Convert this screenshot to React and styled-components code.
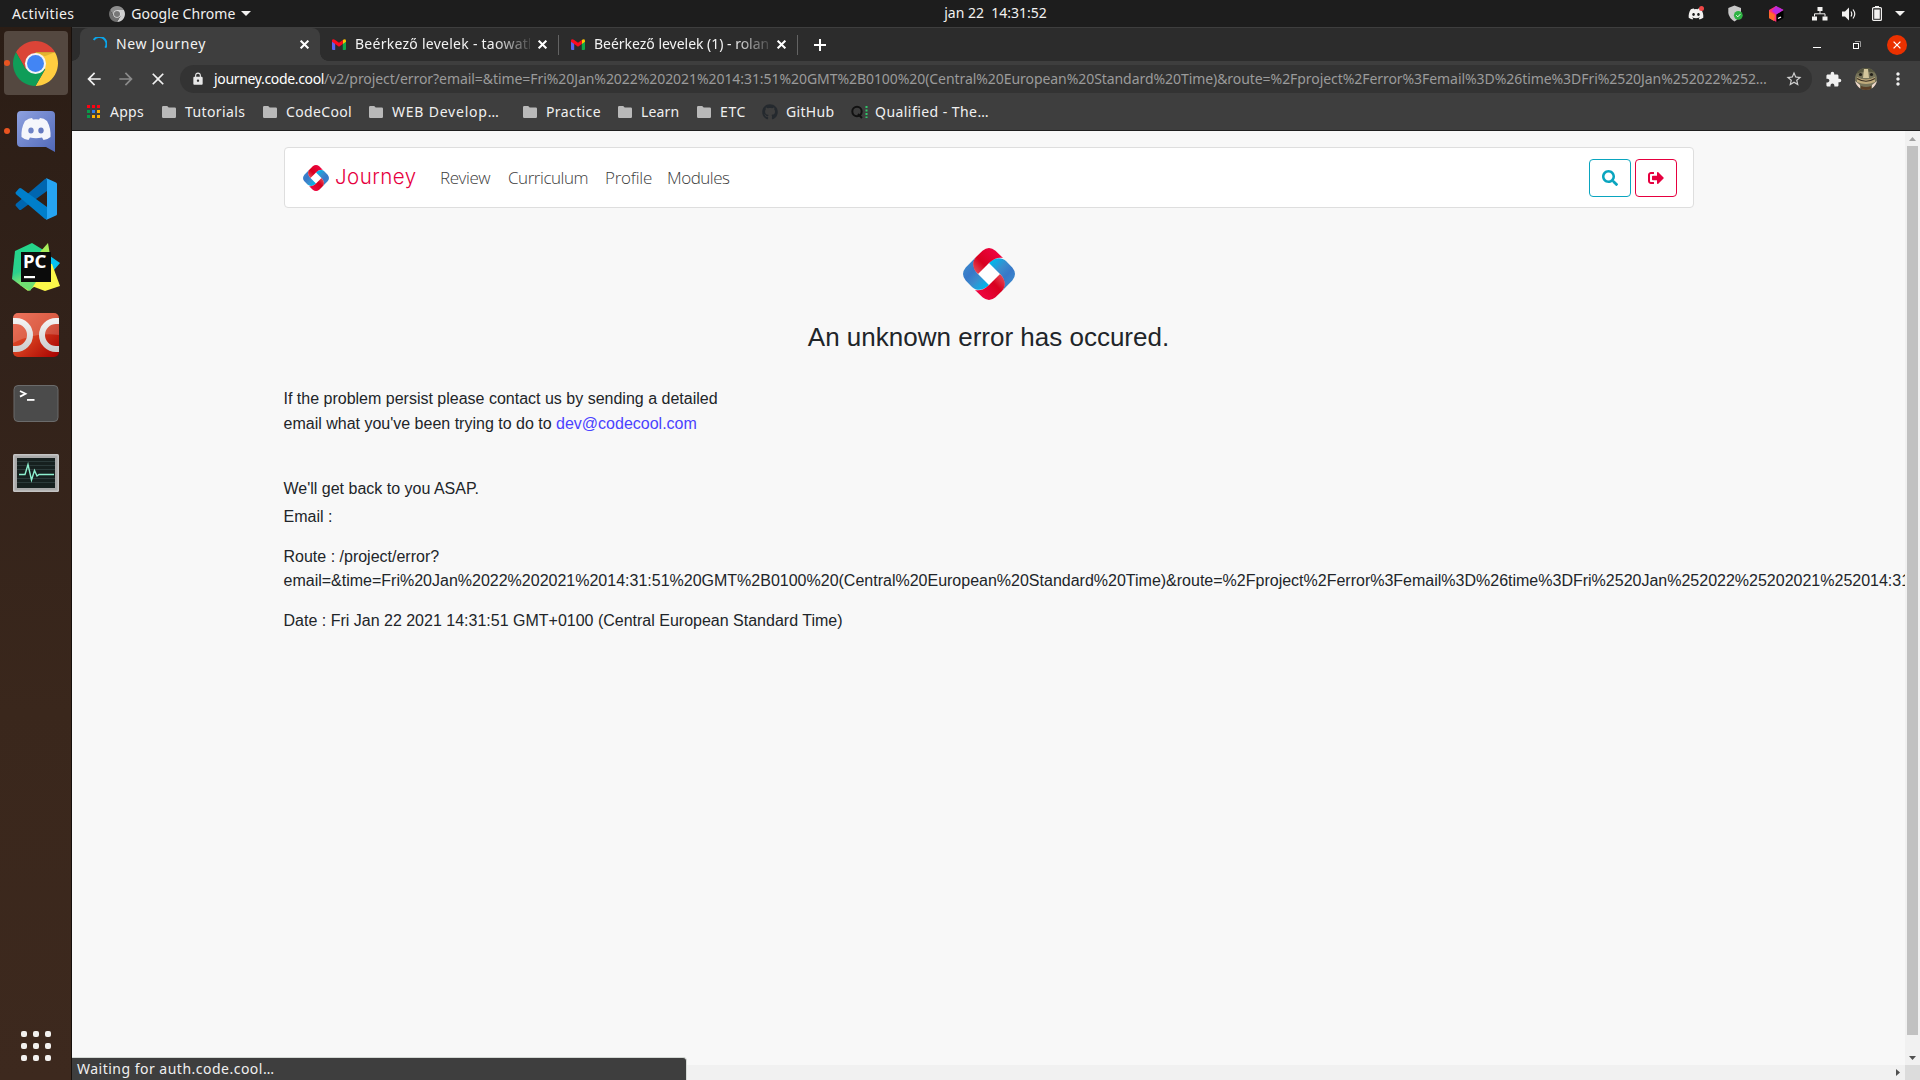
import React from "react";
import styled, { createGlobalStyle } from "styled-components";
import { MdArrowBack, MdArrowForward, MdClose, MdExtension, MdLock, MdMoreVert, MdStarBorder } from "react-icons/md";
import { FaDiscord, FaGithub, FaSearch, FaSignOutAlt } from "react-icons/fa";

const Global = createGlobalStyle`
  * { box-sizing: border-box; }
  html, body { margin: 0; height: 1080px; overflow: hidden; background: #f8f8f8; }
  svg { display: block; flex: none; }
`;

/* ---------- shell ---------- */
const Desktop = styled.div`
  width: 1920px;
  height: 1080px;
  display: flex;
  flex-direction: column;
  overflow: hidden;
  font-family: "Noto Sans", "Open Sans", sans-serif;
  font-size: 14px;
  color: #f2f1f0;
`;
const Text = styled.span`
  white-space: pre;
  letter-spacing: ${(p) => p.$ls || 0}px;
  flex: none;
`;
const ChromeText = styled(Text)`
  padding-bottom: 2px;
`;

/* ---------- top panel ---------- */
const TopPanel = styled.header`
  height: 27px;
  flex: none;
  background: #1d1d1d;
  display: grid;
  grid-template-columns: 1fr auto 1fr;
  align-items: center;
  padding: 0 15px 0 12px;
`;
const PanelLeft = styled.div`
  display: flex;
  align-items: center;
`;
const AppMenu = styled.div`
  display: flex;
  align-items: center;
  margin-left: 35px;
  gap: 6px;
`;
const Clock = styled.div`
  display: flex;
  padding-bottom: 2px;
  margin-left: 74px;
`;
const Tray = styled.div`
  display: flex;
  align-items: center;
  justify-content: flex-end;
`;
const TrayItem = styled.div`
  width: ${(p) => p.$w}px;
  display: flex;
  justify-content: center;
`;
const DiscordTray = styled(TrayItem)`
  position: relative;
  &::after {
    content: "";
    position: absolute;
    top: 0;
    right: 17px;
    width: 5px;
    height: 5px;
    border-radius: 50%;
    background: #f04747;
  }
`;

/* ---------- dock ---------- */
const Body = styled.div`
  flex: 1;
  min-height: 0;
  display: flex;
`;
const Dock = styled.nav`
  width: 72px;
  flex: none;
  border-right: 1px solid #17100c;
  background: linear-gradient(180deg, #2b1d15 0%, #32221a 30%, #3a271c 65%, #3d291e 100%);
  display: flex;
  flex-direction: column;
  align-items: center;
  padding: 4px 0 19px;
`;
const DockItem = styled.div`
  position: relative;
  width: 64px;
  height: 64px;
  margin-bottom: ${(p) => p.$gap ?? 4}px;
  border-radius: 4px;
  background: ${(p) => (p.$active ? "#544840" : "transparent")};
  display: flex;
  align-items: center;
  justify-content: center;
`;
const RunningDot = styled.i`
  position: absolute;
  left: 0;
  top: 29px;
  width: 6px;
  height: 6px;
  border-radius: 50%;
  background: #e95420;
`;
const AppsGrid = styled.div`
  margin-top: auto;
  display: grid;
  grid-template-columns: repeat(3, 6px);
  gap: 6px;
`;
const AppsDot = styled.i`
  width: 6px;
  height: 6px;
  border-radius: 2px;
  background: #f3f1ef;
`;

/* ---------- browser ---------- */
const Browser = styled.main`
  flex: 1;
  min-width: 0;
  display: flex;
  flex-direction: column;
`;
const TabStrip = styled.div`
  height: 34px;
  flex: none;
  background: #2c2c2c;
  border-top: 1px solid #3e3e3e;
  display: flex;
  align-items: stretch;
  padding-left: 8px;
`;
const Tab = styled.div`
  width: ${(p) => p.$w}px;
  flex: none;
  display: flex;
  align-items: center;
  padding: 0 11px 0 12px;
  color: #f3f3f3;
`;
const ActiveTab = styled(Tab)`
  position: relative;
  background: #3e3e3e;
  border-radius: 8px 8px 0 0;
  &::before,
  &::after {
    content: "";
    position: absolute;
    bottom: 0;
    width: 8px;
    height: 8px;
  }
  &::before {
    left: -8px;
    background: radial-gradient(circle at 0 0, #2c2c2c 7.5px, #3e3e3e 8px);
  }
  &::after {
    right: -8px;
    background: radial-gradient(circle at 100% 0, #2c2c2c 7.5px, #3e3e3e 8px);
  }
`;
const TabTitle = styled(ChromeText)`
  margin-left: 9px;
  width: ${(p) => p.$w}px;
  overflow: hidden;
  ${(p) => p.$fade && "mask-image: linear-gradient(90deg, #000 calc(100% - 36px), rgba(0, 0, 0, 0.15) 100%);"}
`;
const TabClose = styled.div`
  margin-left: auto;
  display: flex;
`;
const TabSeparator = styled.i`
  width: 1px;
  height: 20px;
  align-self: center;
  background: #636363;
  flex: none;
`;
const NewTab = styled.div`
  display: flex;
  align-items: center;
  margin-left: 16px;
`;
const WindowControls = styled.div`
  margin-left: auto;
  display: flex;
  align-items: center;
  padding-right: 13px;
`;
const ControlSlot = styled.div`
  width: 40px;
  display: flex;
  justify-content: center;
`;
const CloseCircle = styled.div`
  width: 20px;
  height: 20px;
  margin-left: 10px;
  border-radius: 50%;
  background: #eb3100;
  display: flex;
  align-items: center;
  justify-content: center;
`;

const Toolbar = styled.div`
  height: 36px;
  flex: none;
  background: #3e3e3e;
  display: flex;
  align-items: center;
  padding-left: 12px;
`;
const ToolIcon = styled.div`
  width: ${(p) => p.$w || 32}px;
  flex: none;
  display: flex;
  justify-content: ${(p) => p.$align || "flex-start"};
  color: ${(p) => p.$color || "#f1f1f1"};
`;
const Omnibox = styled.div`
  width: 1632px;
  height: 28px;
  flex: none;
  border-radius: 14px;
  background: #333;
  display: flex;
  align-items: center;
  padding: 0 9px 0 11px;
  color: #9b9b9b;
`;
const Host = styled(ChromeText)`
  color: #fff;
  margin-left: 9px;
`;
const StarSlot = styled.div`
  margin-left: auto;
  color: #d0d0d0;
`;
const Avatar = styled.div`
  width: 22px;
  height: 22px;
  flex: none;
  border-radius: 50%;
  overflow: hidden;
`;

const BookmarksBar = styled.div`
  height: 34px;
  flex: none;
  background: #3e3e3e;
  border-bottom: 1px solid #1f1f1f;
  display: flex;
  padding: 0 0 3px 15px;
`;
const Bookmark = styled.div`
  width: ${(p) => p.$w}px;
  display: flex;
  align-items: center;
  gap: ${(p) => p.$gap || 9}px;
  color: #f0f0f0;
`;

/* ---------- page ---------- */
const Viewport = styled.div`
  position: relative;
  flex: 1;
  min-height: 0;
  display: grid;
  grid-template-columns: 1fr 15px;
  grid-template-rows: 1fr 15px;
  background: #f8f8f8;
`;
const Page = styled.div`
  min-width: 0;
  padding: 16px 0 0 212px;
  font-family: "Liberation Sans", Arial, sans-serif;
  font-size: 16px;
  color: #212529;
`;
const Navbar = styled.div`
  width: 1410px;
  height: 61px;
  border: 1px solid #dedede;
  border-radius: 4px;
  background: #fff;
  display: flex;
  align-items: center;
  padding: 0 16px 0 18px;
`;
const Brand = styled.div`
  display: flex;
  align-items: center;
  width: 137px;
  gap: 6px;
`;
const BrandName = styled(Text)`
  font-family: "Inter", sans-serif;
  font-weight: 300;
  font-size: 20.5px;
  line-height: 24px;
  padding-bottom: 2px;
  color: #e6003f;
`;
const NavLink = styled(Text)`
  width: ${(p) => p.$w}px;
  font-family: "Open Sans", sans-serif;
  font-weight: 300;
  font-size: 17px;
  color: #3c3c3c;
`;
const NavActions = styled.div`
  margin-left: auto;
  display: flex;
  gap: 4px;
`;
const OutlineButton = styled.button`
  width: 42px;
  height: 38px;
  padding: 0 1px 0 0;
  border: 1px solid ${(p) => p.$color};
  border-radius: 4px;
  background: #fff;
  color: ${(p) => p.$color};
  display: flex;
  align-items: center;
  justify-content: center;
`;
const Hero = styled.section`
  width: 1410px;
  height: 178px;
  padding-top: 40px;
  display: flex;
  flex-direction: column;
  align-items: center;
`;
const HeroTitle = styled.h1`
  margin: 22px 1px 0 0;
  font-size: 26px;
  line-height: 31px;
  font-weight: 400;
`;
const Details = styled.section`
  margin-left: -0.5px;
`;
const Paragraph = styled.p`
  margin: 0 0 ${(p) => p.$mb || 0}px;
  line-height: ${(p) => p.$lh || 25}px;
  white-space: pre;
`;
const MailLink = styled.a`
  color: #4a42ff;
`;
const VScroll = styled.div`
  background: #f1f1f1;
  display: flex;
  flex-direction: column;
  align-items: center;
`;
const VArrow = styled.div`
  height: 15px;
  display: flex;
  align-items: center;
`;
const VThumb = styled.div`
  width: 11px;
  height: 889px;
  margin-bottom: 15px;
  background: #c1c1c1;
`;
const HScroll = styled.div`
  background: #f1f1f1;
  display: flex;
  align-items: center;
  justify-content: flex-end;
  padding-right: 5px;
`;
const Corner = styled.div`
  background: #dcdcdc;
`;
const StatusBubble = styled.div`
  position: absolute;
  left: 0;
  bottom: 0;
  width: 615px;
  height: 23px;
  border-top: 1px solid #d5d9d5;
  border-right: 1px solid #d5d9d5;
  border-radius: 0 4px 0 0;
  background: #3e3e3e;
  display: flex;
  align-items: center;
  padding-left: 5px;
  color: #f0f0f0;
`;

/* ---------- drawings ---------- */
const ribbon = "M15 26C9.5 21 8.5 14 13 9L19.5 2.7Q26 -2.7 32.5 2.7L43 13C38 9 31 10 26 15Z";
const ringBase = "M15 26C9.5 21 8.5 14 13 9L19.5 2.7Q26 -2.7 32.5 2.7L40 10C36 9 31 10 26 15Z";
function RibbonLogo({ size, id }) {
  return (
    <svg width={size} height={size} viewBox="0 0 52 52">
      <defs>
        <linearGradient id={id + "r"} x1="12" y1="25" x2="34" y2="4" gradientUnits="userSpaceOnUse">
          <stop offset="0" stopColor="#e8505a" />
          <stop offset=".4" stopColor="#d8001f" />
          <stop offset="1" stopColor="#ee0440" />
        </linearGradient>
        <linearGradient id={id + "b"} x1="34" y1="3" x2="14" y2="24" gradientUnits="userSpaceOnUse">
          <stop offset="0" stopColor="#3b86cc" />
          <stop offset=".3" stopColor="#3878c8" />
          <stop offset=".6" stopColor="#3b8ccd" />
          <stop offset="1" stopColor="#00b8ec" />
        </linearGradient>
      </defs>
      <rect x="17" y="17" width="18" height="18" fill="#fff" transform="rotate(45 26 26)" />
      <g fill={`url(#${id}b)`}>
        <path d={ribbon} transform="rotate(90 26 26)" />
        <path d={ribbon} transform="rotate(270 26 26)" />
      </g>
      <g fill={`url(#${id}r)`}>
        <path d={ringBase} />
        <path d={ringBase} transform="rotate(180 26 26)" />
      </g>
    </svg>
  );
}
function ChromeIcon({ size, mono }) {
  const c = mono ? ["#8d8d8d", "#d0d0d0", "#6f6f6f", "#777"] : ["#db4437", "#ffcd40", "#0f9d58", "#4285f4"];
  const sector = "M22 11H41.05A22 22 0 0 0 2.95 11L12.5 27.5L22 22Z";
  return (
    <svg width={size} height={size} viewBox="0 0 44 44">
      <path d={sector} fill={c[0]} />
      <path d={sector} fill={c[1]} transform="rotate(120 22 22)" />
      <path d={sector} fill={c[2]} transform="rotate(240 22 22)" />
      <path d="M22 11H41.05L31 15Z" fill="#c99a20" opacity={mono ? 0 : 0.5} />
      <circle cx="22" cy="22" r="10.3" fill={mono ? "#ddd" : "#f4f4f4"} />
      <circle cx="22" cy="22" r="8.3" fill={c[3]} />
    </svg>
  );
}
const DiscordTile = () => (
  <svg width="38" height="41" viewBox="0 0 38 41">
    <defs>
      <linearGradient id="dt" x1="0" y1="0" x2="1" y2="1">
        <stop offset="0" stopColor="#8ea1e0" />
        <stop offset="1" stopColor="#5068b8" />
      </linearGradient>
    </defs>
    <path d="M4 0H34Q38 0 38 4V41L29 36H4Q0 36 0 32V4Q0 0 4 0Z" fill="url(#dt)" />
    <path d="M8 10Q12 7 15 7L16 8.5Q19 8 22 8.5L23 7Q27 7 30 10Q34 17 33.5 26Q30 29 26.5 29L25 26.5Q19 28 13 26.5L11.5 29Q8 29 4.5 26Q4 17 8 10Z" fill="#f5f6fb" />
    <ellipse cx="14" cy="19.5" rx="2.7" ry="3" fill="#6f83c6" />
    <ellipse cx="24" cy="19.5" rx="2.7" ry="3" fill="#6579bf" />
  </svg>
);
const CodeIcon = () => (
  <svg width="42" height="42" viewBox="0 0 42 42">
    <path d="M.5 27.5L4 31.5Q5 32.5 6.5 31.5L32 13V.5L30 1L.8 26Z" fill="#0066b0" />
    <path d="M.5 14.5L4 10.5Q5 9.5 6.5 10.5L32 29V41.5L30 41L.8 16Z" fill="#007fcb" />
    <path d="M31 0L41 4.5Q42 5 42 6V36Q42 37 41 37.5L31 42Q32 41 32 39V3Q32 1 31 0Z" fill="#26a4f2" />
  </svg>
);
const PcIcon = () => (
  <svg width="48" height="48" viewBox="0 0 48 48">
    <defs>
      <linearGradient id="pcg" x1="0" y1="0" x2=".3" y2="1">
        <stop offset="0" stopColor="#21d789" />
        <stop offset=".6" stopColor="#2bd08e" />
        <stop offset="1" stopColor="#b6f060" />
      </linearGradient>
    </defs>
    <path d="M38 13L48 20L42 27L36 25Z" fill="#07c3f2" />
    <path d="M3 8L20 0L33 8L28 40L16 48L0 36Z" fill="url(#pcg)" />
    <path d="M28 9L36 0L38 12L34 20Z" fill="#a8ee5a" />
    <path d="M40 21L48 43L33 48L17 42L30 20Z" fill="#fcf84a" />
    <path d="M12 36H26L18 48L8 42Z" fill="#6fdf72" />
    <rect x="9" y="9" width="30" height="30" fill="#0b0b0b" />
    <text x="11" y="25" fontFamily="Noto Sans, sans-serif" fontWeight="700" fontSize="17" textLength="23.5" lengthAdjust="spacingAndGlyphs" fill="#fff">PC</text>
    <rect x="12" y="33" width="11" height="2.2" fill="#fff" />
  </svg>
);
const DcIcon = () => (
  <svg width="46" height="44" viewBox="0 0 46 44">
    <defs>
      <linearGradient id="dcg" x1="0" y1="0" x2="1" y2="1">
        <stop offset="0" stopColor="#e8553a" />
        <stop offset=".5" stopColor="#d33a1c" />
        <stop offset="1" stopColor="#a60000" />
      </linearGradient>
      <linearGradient id="dcw" x1="0" y1="0" x2="0" y2="1">
        <stop offset="0" stopColor="#f2f2f2" />
        <stop offset="1" stopColor="#cfcfcf" />
      </linearGradient>
      <clipPath id="dcc"><rect width="46" height="44" rx="5" /></clipPath>
    </defs>
    <g clipPath="url(#dcc)">
      <rect width="46" height="44" fill="url(#dcg)" />
      <path d="M0 0H46V22Q22 19 0 30Z" fill="#fff" opacity=".18" />
    </g>
    <path d="M0 8H3A14 14 0 0 1 3 36H0M46 8H43A14 14 0 0 0 43 36H46" fill="none" stroke="url(#dcw)" strokeWidth="6" />
  </svg>
);
const TerminalIcon = () => (
  <svg width="46" height="37" viewBox="0 0 46 37">
    <rect x="1" y=".5" width="44" height="36" rx="4" fill="#4b4b4b" stroke="#6b6b6b" />
    <path d="M7 6L12.5 8.8L7 11.6" fill="none" stroke="#fff" strokeWidth="1.8" />
    <rect x="14" y="14" width="7.5" height="1.8" fill="#fff" />
  </svg>
);
const MonitorIcon = () => (
  <svg width="46" height="38" viewBox="0 0 46 38">
    <rect width="46" height="38" rx="1.5" fill="#c4c4c4" />
    <rect x="1.5" y="1.5" width="43" height="35" fill="#a9a9a9" />
    <rect x="4" y="4" width="38" height="30" fill="#16201f" />
    <path d="M4 7.5H42M4 11.5H42M4 15.5H42M4 24.5H42M4 28.5H42" stroke="#2b3a3a" />
    <path d="M6 20.5H12L15 10.5L18.5 26L21.5 16.5L24 22L26 20.5H41" fill="none" stroke="#8df0cf" strokeWidth="1.4" />
  </svg>
);
const Triangle = ({ w, h, color, up }) => (
  <svg width={w} height={h} viewBox="0 0 10 5" preserveAspectRatio="none">
    <path d={up ? "M0 5H10L5 0Z" : "M0 0H10L5 5Z"} fill={color} />
  </svg>
);
const Shield = () => (
  <svg width="16" height="17" viewBox="0 0 16 17">
    <path d="M6.5 .5L13 3V8Q12 13 6.5 16.5Q1 13 .3 8V3Z" fill="#c8c8c8" />
    <circle cx="10.3" cy="10.3" r="4.4" fill="#2fb344" />
    <path d="M8.3 10.3L9.8 11.8L12.3 9.2" stroke="#fff" fill="none" />
  </svg>
);
const Toolbox = () => (
  <svg width="15" height="16" viewBox="0 0 15 16">
    <path d="M0 4L7 0L14.5 4L7.5 8.5V16L0 12Z" fill="#ff2d78" />
    <path d="M7 0L14.5 4L7.5 8.5L3 5Z" fill="#b92be0" />
    <path d="M0 5L6 9L5 15L0 12Z" fill="#ff6a2b" />
    <path d="M7.5 8.5L14.5 4.5V12L7.5 16Z" fill="#000" />
    <path d="M9 12.5L12 11" stroke="#fff" strokeWidth="1.3" />
  </svg>
);
const Network = () => (
  <svg width="16" height="14" viewBox="0 0 16 14" fill="#f2f1f0">
    <path d="M5.5 0H10.5V4H5.5ZM0 9.5H5V13.5H0ZM10.5 9.5H15.5V13.5H10.5ZM7.5 4H8.5V6.5H7.5Z" />
    <path d="M2.5 9.5V6.8H13V9.5" fill="none" stroke="#f2f1f0" />
  </svg>
);
const Volume = () => (
  <svg width="15" height="14" viewBox="0 0 15 14">
    <path d="M0 4.500H3L7 .5V13.5L3 9.5H0Z" fill="#f2f1f0" />
    <path d="M9 4.5Q10.5 7 9 9.5M11 2.5Q14.5 7 11 11.5" fill="none" stroke="#f2f1f0" strokeWidth="1.2" />
  </svg>
);
const Battery = () => (
  <svg width="10" height="15" viewBox="0 0 10 15">
    <path d="M3 0H7V1.5H3Z" fill="#f2f1f0" />
    <rect x=".6" y="1.6" width="8.8" height="12.8" rx="1" fill="none" stroke="#f2f1f0" strokeWidth="1.2" />
    <rect x="2.2" y="3.5" width="5.6" height="9.3" fill="#f2f1f0" />
  </svg>
);
const Gmail = () => (
  <svg width="14" height="11" viewBox="0 0 14 11">
    <path d="M0 1.5V10Q0 11 1 11H3.2V4Z" fill="#5b62f0" />
    <path d="M14 1.5V10Q14 11 13 11H10.8V4Z" fill="#10a848" />
    <path d="M10.8 1V5L14 2.8V1.5Q13.5 -.8 10.8 1Z" fill="#ffc400" />
    <path d="M0 1.5Q.5 -.8 3.2 1L7 3.8L10.8 1V5L7 7.8L3.2 5L0 2.8Z" fill="#ff0a1e" />
  </svg>
);
const Spinner = () => (
  <svg width="15" height="15" viewBox="0 0 15 15">
    <path d="M1.7 3A6.5 6.5 0 1 1 13.3 10.8" fill="none" stroke="#0aa5ea" strokeWidth="2" />
  </svg>
);
const Folder = () => (
  <svg width="14" height="12" viewBox="0 0 14 12">
    <path d="M1.2 0H5.2L6.7 1.6H12.8Q14 1.6 14 2.8V10.8Q14 12 12.8 12H1.2Q0 12 0 10.8V1.2Q0 0 1.2 0Z" fill="#b9b9b9" />
  </svg>
);
const appColors = ["#f01", "#f01", "#f01", "#0a9a4a", "#2f7be8", "#ffb000", "#0a9a4a", "#ffb000", "#ffb000"];
const AppsIcon = () => (
  <svg width="13" height="14" viewBox="0 0 13 14">
    {appColors.map((c, i) => (
      <rect key={i} x={(i % 3) * 5} y={Math.floor(i / 3) * 5} width="3" height="3" fill={c} />
    ))}
  </svg>
);
const Qualified = () => (
  <svg width="17" height="14" viewBox="0 0 17 14">
    <circle cx="6" cy="6.500" r="4.7" fill="none" stroke="#111" strokeWidth="2" />
    <path d="M7 9L11 13" stroke="#111" strokeWidth="2" />
    <path d="M15.500 1V13" stroke="#2fc76a" strokeWidth="2" strokeDasharray="2 1.5" />
  </svg>
);
const Turtle = () => (
  <svg width="22" height="22" viewBox="0 0 22 22">
    <rect width="22" height="22" fill="#77745a" />
    <path d="M0 0H22V5Q11 2 0 6Z" fill="#55553f" />
    <path d="M9 1H13L14 10H8Z" fill="#d3c69c" />
    <path d="M2 9Q11 14 20 9V14Q11 18 2 14Z" fill="#c0ab7c" />
    <path d="M2 10.5Q11 16 20 10.5" fill="none" stroke="#3a2f22" strokeWidth="1.2" />
    <circle cx="5.5" cy="6.5" r="1.6" fill="#23211a" />
    <circle cx="16.500" cy="6.5" r="1.6" fill="#23211a" />
    <path d="M0 13L5 17L5 22H0ZM22 13L17 17L17 22H22Z" fill="#f0d9cd" />
    <path d="M6 18Q11 20 16 18V22H6Z" fill="#5b3f27" />
  </svg>
);
const Plus = () => (
  <svg width="12" height="12" viewBox="0 0 12 12">
    <path d="M6 0V12M0 6H12" stroke="#fff" strokeWidth="2" />
  </svg>
);
const Cross = ({ size, w = 1.8 }) => (
  <svg width={size} height={size} viewBox="0 0 8 8">
    <path d="M.6 .6L7.4 7.4M7.4 .6L.6 7.4" stroke="#fff" strokeWidth={w} />
  </svg>
);

/* ---------- data ---------- */
const bookmarks = [
  { label: "Apps", ls: 0.28, w: 75, gap: 10, icon: <AppsIcon /> },
  { label: "Tutorials", ls: 0.38, w: 101, icon: <Folder /> },
  { label: "CodeCool", ls: 0.35, w: 106, icon: <Folder /> },
  { label: "WEB Develop…", ls: 0.78, w: 154, icon: <Folder /> },
  { label: "Practice", ls: 0.4, w: 95, icon: <Folder /> },
  { label: "Learn", ls: 0.15, w: 79, icon: <Folder /> },
  { label: "ETC", ls: 0.6, w: 65, icon: <Folder /> },
  { label: "GitHub", ls: 0.3, w: 89, gap: 8, icon: <FaGithub size={16} color="#24292e" /> },
  { label: "Qualified - The…", ls: 0.45, w: 150, gap: 7, icon: <Qualified /> },
];
const links = [
  { label: "Review", ls: -0.42, w: 68 },
  { label: "Curriculum", ls: -0.45, w: 97 },
  { label: "Profile", ls: -0.24, w: 62 },
  { label: "Modules", ls: -0.5, w: 70 },
];
const route =
  "email=&time=Fri%20Jan%2022%202021%2014:31:51%20GMT%2B0100%20(Central%20European%20Standard%20Time)&route=%2Fproject%2Ferror%3Femail%3D%26time%3DFri%2520Jan%252022%25202021%252014:31";

export default function App() {
  return (
    <Desktop>
      <Global />
      <TopPanel>
        <PanelLeft>
          <Text $ls={0.4}>Activities</Text>
          <AppMenu>
            <ChromeIcon size={16} mono />
            <Text $ls={0.05}>Google Chrome</Text>
            <Triangle w={10} h={5} color="#f2f1f0" />
          </AppMenu>
        </PanelLeft>
        <Clock>
          <Text>{"jan 22  14:31:52"}</Text>
        </Clock>
        <Tray>
          <DiscordTray $w={50}><FaDiscord size={16} /></DiscordTray>
          <TrayItem $w={30}><Shield /></TrayItem>
          <TrayItem $w={50}><Toolbox /></TrayItem>
          <TrayItem $w={38}><Network /></TrayItem>
          <TrayItem $w={20}><Volume /></TrayItem>
          <TrayItem $w={36}><Battery /></TrayItem>
          <Triangle w={10} h={5} color="#f2f1f0" />
        </Tray>
      </TopPanel>
      <Body>
        <Dock>
          <DockItem $active><RunningDot /><ChromeIcon size={45} /></DockItem>
          <DockItem><RunningDot /><DiscordTile /></DockItem>
          <DockItem><CodeIcon /></DockItem>
          <DockItem><PcIcon /></DockItem>
          <DockItem><DcIcon /></DockItem>
          <DockItem $gap={6}><TerminalIcon /></DockItem>
          <DockItem><MonitorIcon /></DockItem>
          <AppsGrid>{appColors.map((_, i) => <AppsDot key={i} />)}</AppsGrid>
        </Dock>
        <Browser>
          <TabStrip>
            <ActiveTab $w={240}>
              <Spinner />
              <TabTitle $ls={0.63} $w={140}>New Journey</TabTitle>
              <TabClose><Cross size={9} /></TabClose>
            </ActiveTab>
            <Tab $w={238}>
              <Gmail />
              <TabTitle $ls={0.26} $w={175} $fade>Beérkező levelek - taowatl</TabTitle>
              <TabClose><Cross size={9} /></TabClose>
            </Tab>
            <TabSeparator />
            <Tab $w={238}>
              <Gmail />
              <TabTitle $ls={-0.02} $w={175} $fade>Beérkező levelek (1) - rolan</TabTitle>
              <TabClose><Cross size={9} /></TabClose>
            </Tab>
            <TabSeparator />
            <NewTab><Plus /></NewTab>
            <WindowControls>
              <ControlSlot>
                <svg width="8" height="6" viewBox="0 0 8 6"><rect y="5" width="8" height="1" fill="#fff" /></svg>
              </ControlSlot>
              <ControlSlot>
                <svg width="8" height="8" viewBox="0 0 8 8">
                  <path d="M2 .5H7.5V6" fill="none" stroke="#999" />
                  <rect x=".5" y="2.5" width="5" height="5" fill="none" stroke="#fff" />
                </svg>
              </ControlSlot>
              <CloseCircle><Cross size={8} w={1.3} /></CloseCircle>
            </WindowControls>
          </TabStrip>
          <Toolbar>
            <ToolIcon><MdArrowBack size={20} /></ToolIcon>
            <ToolIcon $color="#8b8b8b"><MdArrowForward size={20} /></ToolIcon>
            <ToolIcon><MdClose size={20} /></ToolIcon>
            <Omnibox>
              <MdLock size={14} color="#e8e8e8" />
              <Host $ls={-0.34}>journey.code.cool</Host>
              <ChromeText $ls={-0.063}>
                /v2/project/error?email=&amp;time=Fri%20Jan%2022%202021%2014:31:51%20GMT%2B0100%20(Central%20European%20Standard%20Time)&amp;route=%2Fproject%2Ferror%3Femail%3D%26time%3DFri%2520Jan%252022%252…
              </ChromeText>
              <StarSlot><MdStarBorder size={18} /></StarSlot>
            </Omnibox>
            <ToolIcon $w={43} $align="center"><MdExtension size={17} /></ToolIcon>
            <Avatar><Turtle /></Avatar>
            <ToolIcon $w={42} $align="center"><MdMoreVert size={20} /></ToolIcon>
          </Toolbar>
          <BookmarksBar>
            {bookmarks.map((b) => (
              <Bookmark key={b.label} $w={b.w} $gap={b.gap}>
                {b.icon}
                <ChromeText $ls={b.ls}>{b.label}</ChromeText>
              </Bookmark>
            ))}
          </BookmarksBar>
          <Viewport>
            <Page>
              <Navbar>
                <Brand>
                  <RibbonLogo size={26} id="nav" />
                  <BrandName $ls={0.45}>Journey</BrandName>
                </Brand>
                {links.map((l) => (
                  <NavLink key={l.label} $ls={l.ls} $w={l.w}>{l.label}</NavLink>
                ))}
                <NavActions>
                  <OutlineButton $color="#0aa5bf"><FaSearch size={16} /></OutlineButton>
                  <OutlineButton $color="#e6003f"><FaSignOutAlt size={16} /></OutlineButton>
                </NavActions>
              </Navbar>
              <Hero>
                <RibbonLogo size={52} id="hero" />
                <HeroTitle>An unknown error has occured.</HeroTitle>
              </Hero>
              <Details>
                <Paragraph>If the problem persist please contact us by sending a detailed</Paragraph>
                <Paragraph $mb={40}>
                  {"email what you've been trying to do to "}
                  <MailLink>dev@codecool.com</MailLink>
                </Paragraph>
                <Paragraph $mb={4}>We'll get back to you ASAP.</Paragraph>
                <Paragraph $mb={16} $lh={24}>Email : </Paragraph>
                <Paragraph $lh={24}>Route : /project/error?</Paragraph>
                <Paragraph $mb={16} $lh={24}>{route}</Paragraph>
                <Paragraph $lh={24}>Date : Fri Jan 22 2021 14:31:51 GMT+0100 (Central European Standard Time)</Paragraph>
              </Details>
            </Page>
            <VScroll>
              <VArrow><Triangle w={7} h={4} color="#a0a0a0" up /></VArrow>
              <VThumb />
              <VArrow><Triangle w={7} h={4} color="#505050" /></VArrow>
            </VScroll>
            <HScroll>
              <svg width="4" height="7" viewBox="0 0 4 7"><path d="M0 0V7L4 3.5Z" fill="#505050" /></svg>
            </HScroll>
            <Corner />
            <StatusBubble><ChromeText $ls={0.49}>Waiting for auth.code.cool…</ChromeText></StatusBubble>
          </Viewport>
        </Browser>
      </Body>
    </Desktop>
  );
}
